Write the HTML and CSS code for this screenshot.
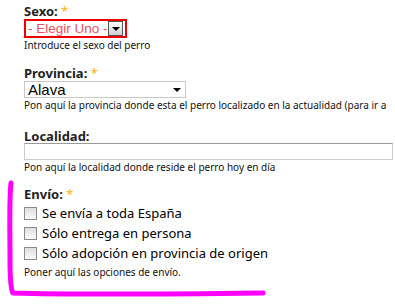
FILE: index.html
```html
<!DOCTYPE html>
<html>
  <head>
    <meta charset="utf-8" />
    <title>Perro</title>
    <link rel="stylesheet" href="styles.css">
  </head>
  <body>
    <div class="form">
      <div class="item">
        <label class="lbl">Sexo: <span class="req">*</span></label>
        <div class="sel sel-error">
          <span class="sel-text">- Elegir Uno -</span>
          <span class="sel-btn"><span class="arrow"></span></span>
        </div>
        <div class="desc">Introduce el sexo del perro</div>
      </div>
      <div class="item item-prov">
        <label class="lbl">Provincia: <span class="req">*</span></label>
        <div class="sel sel-wide">
          <span class="sel-text">Alava</span>
          <span class="arrow"></span>
        </div>
        <div class="desc">Pon aquí la provincia donde esta el perro localizado en la actualidad (para ir a</div>
      </div>
      <div class="item item-loc">
        <label class="lbl">Localidad:</label>
        <div class="text-input"></div>
        <div class="desc">Pon aquí la localidad donde reside el perro hoy en día</div>
      </div>
      <div class="item item-envio">
        <label class="lbl">Envío: <span class="req">*</span></label>
        <div class="checks">
          <div class="check"><span class="box"></span>Se envía a toda España</div>
          <div class="check"><span class="box"></span>Sólo entrega en persona</div>
          <div class="check"><span class="box"></span>Sólo adopción en provincia de origen</div>
        </div>
        <div class="desc">Poner aquí las opciones de envío.</div>
      </div>
    </div>
    <svg class="scribble" width="395" height="306" viewBox="0 0 395 306">
      <path d="M11 183 C9 200 10 230 10 260 C10 280 11 290 13 293 C80 295 180 294 263 293" fill="none" stroke="#ff00ff" stroke-width="5" stroke-linecap="round" stroke-linejoin="round"/>
    </svg>
  </body>
</html>
```

FILE: styles.css
```css
body {
  margin: 0;
  background: #ffffff;
  font-family: "Noto Sans", "DejaVu Sans", sans-serif;
  color: #000000;
  overflow: hidden;
}
.form {
  padding: 4px 0 0 24px;
}
.item {
  margin-bottom: 15px;
}
.item-prov {
  margin-bottom: 18px;
}
.item-loc {
  margin-bottom: 14px;
}
.lbl {
  display: block;
  font-weight: bold;
  font-size: 13px;
  color: #222222;
  line-height: 14px;
}
.req {
  color: #ffb400;
  font-weight: normal;
}
.sel {
  display: flex;
  align-items: center;
  background: #ffffff;
  border: 1px solid #b8b8b8;
}
.sel-error {
  width: 99px;
  height: 15px;
  margin-top: 1px;
  border: 2px solid #ee0000;
}
.sel-error .sel-text {
  color: #f0505a;
  font-family: "Liberation Sans", Arial, sans-serif;
  font-size: 13.5px;
  line-height: 15px;
  padding-left: 2px;
  flex: 1;
  white-space: nowrap;
}
.sel-btn {
  flex: none;
  width: 13px;
  height: 13px;
  border: 1px solid #555555;
  background: linear-gradient(#ffffff, #d0d0d0);
  display: flex;
  align-items: center;
  justify-content: center;
  margin-right: 2px;
}
.arrow {
  width: 0;
  height: 0;
  border-left: 4px solid transparent;
  border-right: 4px solid transparent;
  border-top: 4px solid #000000;
}
.sel-wide {
  width: 156px;
  height: 15px;
  margin-top: 1px;
  padding-right: 4px;
  border-color: #c8c8c8;
}
.sel-wide .sel-text {
  flex: 1;
  font-family: "Liberation Sans", Arial, sans-serif;
  font-size: 15px;
  line-height: 15px;
  padding-left: 3px;
}
.text-input {
  width: 367px;
  height: 15px;
  border: 1px solid #cccccc;
  border-top-color: #9a9a9a;
}
.desc {
  font-size: 10px;
  line-height: 12px;
  margin-top: 1px;
  color: #111111;
  white-space: nowrap;
}
.checks {
  margin-top: 2px;
}
.check {
  display: flex;
  align-items: center;
  font-size: 13px;
  height: 20px;
}
.box {
  width: 11px;
  height: 11px;
  border: 1px solid #8a8a8a;
  background: linear-gradient(#dedede, #fafafa);
  margin-right: 5px;
}
.item-envio .desc {
  margin-top: 3px;
}
.scribble {
  position: absolute;
  left: 0;
  top: 0;
  pointer-events: none;
}
```
